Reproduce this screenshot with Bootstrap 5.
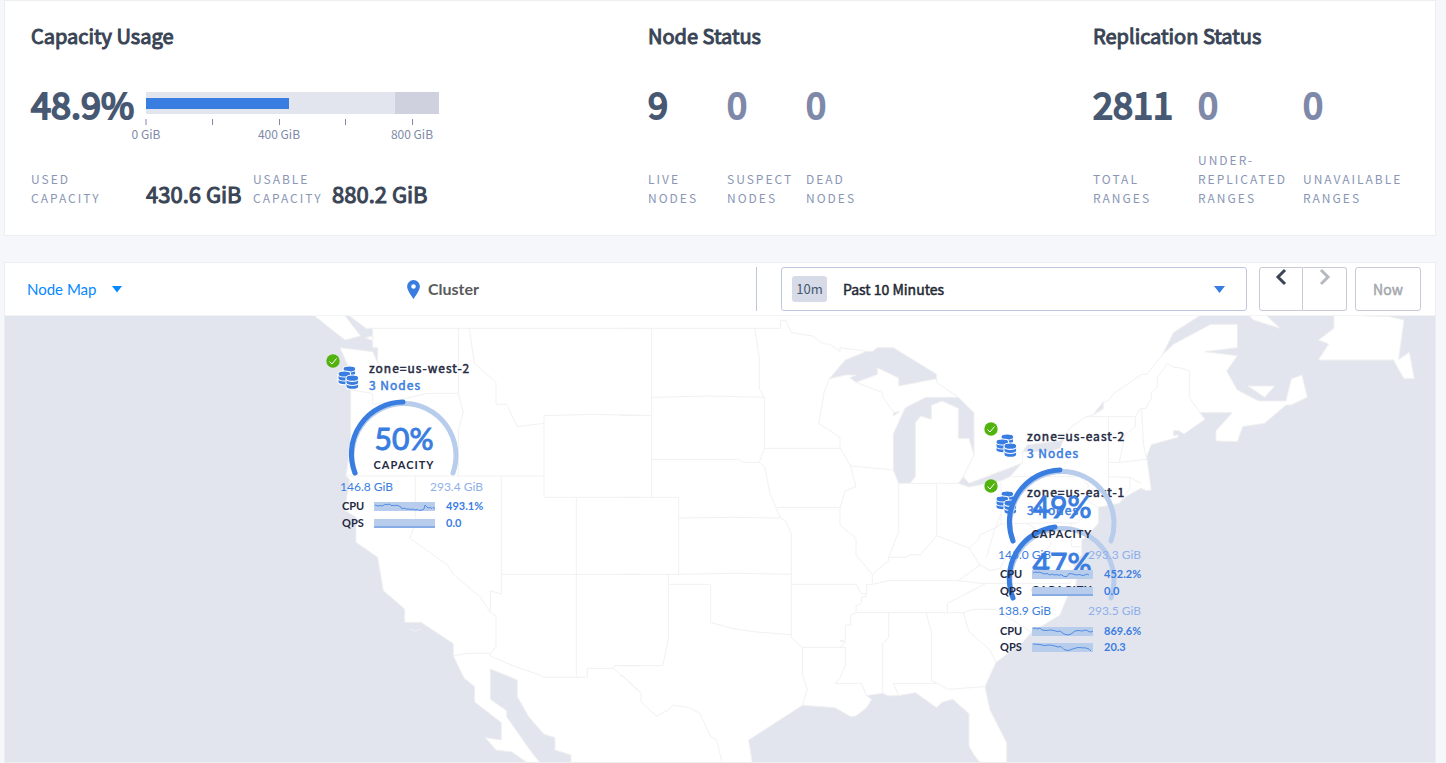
<!DOCTYPE html>
<html lang="en">
<head>
<meta charset="utf-8">
<meta name="viewport" content="width=device-width, initial-scale=1">
<title>Cluster Overview</title>
<link href="https://cdn.jsdelivr.net/npm/bootstrap@5.3.0/dist/css/bootstrap.min.css" rel="stylesheet">
<style>
  :root { --ui: "Noto Sans CJK SC", "Noto Sans", sans-serif; --lato: Lato, "Open Sans", sans-serif; }
  body { background: #f5f7fa; font-family: var(--ui); padding: 0 10px 1px 4px; }
  .panel { background: #fff; border: 1px solid #eceef1; }
  .summary { display: grid; grid-template-columns: 617fr 445fr 316fr; padding: 18px 26px 28px; margin-bottom: 26px; }
  .summary h2 { font-size: 20px; line-height: 34px; font-weight: 400; color: #394455; margin: 0 0 30px; -webkit-text-stroke: 1px; }
  .stats { display: grid; row-gap: 27px; margin: 0; grid-auto-flow: column; grid-template-rows: 40px minmax(57px, auto); }
  .stats-nodes { grid-template-columns: repeat(3, 79px); }
  .stats-ranges { grid-template-columns: repeat(3, 105px); }
  .capacity { display: grid; grid-template-columns: 115px 107px 79px 110px; grid-template-rows: 40px 57px; row-gap: 27px; }
  .big { font-size: 36px; line-height: 40px; font-weight: 400; color: #475872; margin: 0; -webkit-text-stroke: 2px; }
  .idle { color: #7e89a9; }
  .caption { align-self: end; font-size: 12px; line-height: 19px; letter-spacing: 2px; text-transform: uppercase; font-weight: 400; color: #8a96b5; margin: 0; }
  .amount { align-self: end; font-size: 22px; line-height: 28px; font-weight: 400; -webkit-text-stroke: 1px; color: #394455; white-space: nowrap; }
  .gauge { grid-column: 2 / 5; overflow: visible; }
  .gauge text { font-size: 12px; fill: #7e89a9; text-anchor: middle; }
  .toolbar { display: grid; grid-template-columns: 402fr 349fr 679fr; height: 53px; align-items: center; border-bottom: 1px solid #f3f4f6; }
  .view-pick { font-family: var(--lato); font-size: 15px; color: #0788ff; padding: 0 0 0 22px; border: 0; background: none; }
  .crumb { font-family: var(--lato); font-size: 16px; font-weight: 700; color: #5a5a5a; }
  .time { border-left: 1px solid #c0c6d9; height: 44px; padding: 0 14px 0 24px; }
  .tbtn { background: #fff; border: 1px solid #c8cbd6; border-radius: 3px; height: 44px; font-size: 14px; padding: 0; }
  .tbtn:disabled { color: #a5a8ae; }
  .range { border-color: #c0c6e0; color: #242a35; padding: 0 21px 0 10px; -webkit-text-stroke: .5px; }
  .chip { background: #d6dbe7; color: #475872; border-radius: 3px; width: 35px; line-height: 26px; font-size: 13px; -webkit-text-stroke: 0; }
  .step { width: 44px; padding-bottom: 24px; line-height: 1; }
  .now { width: 66px; -webkit-text-stroke: .5px; }
  .map-wrap { min-height: 446px; }
  .map { display: block; width: 100%; height: 100%; background: #fff; }
  .water { fill: #e2e5ee; }
  .land { fill: #fff; }
  .water, .land, .lines { stroke: #f0f0f0; stroke-width: 1px; vector-effect: non-scaling-stroke; }
  .lines { fill: none; stroke: #f1f1f1; }
  .map text { font-family: var(--lato); font-weight: 700; font-size: 11px; fill: #3a7de1; }
  .map .dark { fill: #242a42; }
  .map .zone { font-family: var(--ui); font-size: 12px; letter-spacing: 1px; font-weight: 400; stroke: #3a7de1; stroke-width: .5px; }
  .map .zone.dark { stroke: #242a42; }
  .map .pct { font-size: 30px; font-weight: 400; text-anchor: middle; stroke: #3a7de1; stroke-width: 1px; }
  .map .cap { text-anchor: middle; letter-spacing: 1px; }
  .map .gib { font-size: 12px; font-weight: 400; }
  .map .faint { fill: #8fb0ea; text-anchor: end; }
  .arc { fill: none; stroke: #b8ccec; stroke-width: 5; stroke-linecap: round; }
  .arc.used { stroke: #3a7de1; }
  .spark { fill: none; stroke: #3a7de1; stroke-width: .8; }
</style>
</head>
<body class="d-flex flex-column min-vh-100">

<section class="panel summary">
  <div>
    <h2>Capacity Usage</h2>
    <div class="capacity">
      <div class="big">48.9%</div>
      <svg class="gauge" width="293" height="50" viewBox="0 0 293 50" role="img" aria-label="Capacity gauge">
        <rect y="9" width="293" height="22" fill="#e2e5ee"/>
        <rect x="249" y="9" width="44" height="22" fill="#cfd1de"/>
        <rect y="15" width="143" height="11" fill="#3a7de1"/>
        <path d="M0 36v6M66.500 36v6M133.500 36v6M199.500 36v6M266.500 36v6" stroke="#7e89a9"/>
        <text x="0" y="56">0 GiB</text><text x="133" y="56">400 GiB</text><text x="266" y="56">800 GiB</text>
      </svg>
      <div class="caption">Used<br>Capacity</div>
      <div class="amount">430.6 GiB</div>
      <div class="caption">Usable<br>Capacity</div>
      <div class="amount">880.2 GiB</div>
    </div>
  </div>
  <div>
    <h2>Node Status</h2>
    <div class="stats stats-nodes">
      <div class="big">9</div><div class="caption">Live<br>Nodes</div>
      <div class="big idle">0</div><div class="caption">Suspect<br>Nodes</div>
      <div class="big idle">0</div><div class="caption">Dead<br>Nodes</div>
    </div>
  </div>
  <div>
    <h2>Replication Status</h2>
    <div class="stats stats-ranges">
      <div class="big">2811</div><div class="caption">Total<br>Ranges</div>
      <div class="big idle">0</div><div class="caption">Under-<br>replicated<br>Ranges</div>
      <div class="big idle">0</div><div class="caption">Unavailable<br>Ranges</div>
    </div>
  </div>
</section>

<section class="panel d-flex flex-column flex-grow-1">
  <div class="toolbar">
    <div><button type="button" class="view-pick d-flex align-items-center">Node Map
      <svg class="ms-3" width="10" height="8" viewBox="0 0 10 8" aria-hidden="true"><path d="M0 1h10L5 7.500z" fill="#0788ff"/></svg></button></div>
    <div class="crumb d-flex align-items-center gap-2">
      <svg width="13" height="19" viewBox="0 0 13 19" aria-hidden="true"><path fill="#3a7de1" fill-rule="evenodd" d="M6.500 0A6.400 6.400 0 0 0 .1 6.500C.1 10.500 6.500 19 6.500 19s6.400-8.500 6.400-12.500A6.400 6.400 0 0 0 6.500 0zm0 4.200a2.300 2.300 0 1 1 0 4.600 2.300 2.300 0 0 1 0-4.600z"/></svg>
      Cluster</div>
    <div class="time d-flex">
      <button type="button" class="tbtn range d-flex align-items-center flex-grow-1">
        <span class="chip text-center">10m</span><span class="ms-3">Past 10 Minutes</span>
        <svg class="ms-auto" width="11" height="8" viewBox="0 0 11 8" aria-hidden="true"><path d="M0 1h11L5.500 8z" fill="#3a7de1"/></svg>
      </button>
      <div class="btn-group ms-2 ps-1 me-2">
        <button type="button" class="tbtn step rounded-end-0" aria-label="Previous timeframe"><svg width="12" height="18" viewBox="0 0 12 18" aria-hidden="true"><path d="M10 2 3 9l7 7" fill="none" stroke="#394455" stroke-width="3"/></svg></button>
        <button type="button" class="tbtn step rounded-start-0 border-start-0" disabled aria-label="Next timeframe"><svg width="12" height="18" viewBox="0 0 12 18" aria-hidden="true"><path d="m2 2 7 7-7 7" fill="none" stroke="#b6b9c0" stroke-width="3"/></svg></button>
      </div>
      <button type="button" class="tbtn now" disabled>Now</button>
    </div>
  </div>
  <div class="map-wrap flex-grow-1">
  <svg class="map" viewBox="0 0 1430 446" preserveAspectRatio="xMidYMin slice" role="img" aria-label="Node map">
    <defs>
      <g id="stack-disc">
        <path d="M0 2.500C0-.8 11-.8 11 2.500V9.500C11 12.800 0 12.800 0 9.500z" fill="#3a7de1" stroke="#fff" stroke-width=".9"/>
        <path d="M0 3.200c1 2.800 10 2.800 11 0M0 6.600c1 2.800 10 2.800 11 0" fill="none" stroke="#fff" stroke-width=".9"/>
      </g>
      <g id="zone-icon">
        <use href="#stack-disc" transform="translate(-61 -88) scale(1.150)"/>
        <use href="#stack-disc" transform="translate(-66 -83) scale(1.150)"/>
        <use href="#stack-disc" transform="translate(-58 -79) scale(1.150 1.200)"/>
        <circle cx="-71" cy="-93" r="6.700" fill="#52b30f"/>
        <path d="m-74.500-92.500 2.500 2.500 4.500-5.500" fill="none" stroke="#fff"/>
      </g>
      <path id="dial" class="arc" d="M-49 19A52 52 0 1 1 49 19"/>
    </defs>

    <!-- Atlantic side -->
    <g transform="translate(975 -6) scale(.333333)">
      <path class="water" d="M662 15 580 68 547 135 580 103 692 43H772V113L675 125 772 137 740 183 772 240 836 273H918L934 206 966 195 982 262 934 285 918 285 854 340 788 350 772 395 708 393V362L757 308H660L675 328 612 372 596 362H580V378L594 374V382L514 404 500 440 514 540 500 542 482 535 435 562 418 580 355 592V640L320 680 305 690V735L280 760 290 800 285 850 272 835 240 915 155 967 125 1000 48 1057 15 1130 30 1200 80 1298V1360H1372V15z"/>
      <path class="land" d="M1062 15V55L1015 90 1046 102 1015 150H1240L1272 206H1303L1288 127 1256 148 1272 30 1230 20 1155 18V15zM806 15 820 30 900 55 858 15zM804 228H884L854 262z"/>
      <path class="water" d="M128 425 142 404 240 393 258 372 240 415 205 425zM340 313 370 275V295z"/>
      <path class="lines" d="M318 320 340 315 370 297 372 275 385 272 402 250 485 193H500L547 135M128 425V460M258 372 272 352 318 320H466L482 295H498L514 265V250L532 230V203L562 160 580 172 600 173 628 183V262L660 308M466 320V350L435 375 418 457M385 318V560M385 457H418L500 448 490 400 485 295M385 500 450 502 482 520M450 502V535L418 580M95 500H300L325 525 320 570 355 592M63 515V642L230 638 290 640 320 615M63 642 45 655 20 740M140 640 190 670 215 700 200 720 240 740 290 790M0 820H272M0 898H48L155 967M272 640 275 710H305"/>
    </g>
    <!-- Plains, Great Lakes and Gulf -->
    <g transform="translate(615 -6) scale(.333333)">
      <path class="water" d="M386 1290 547 1186 645 1193 692 1220 708 1218 740 1193 755 1168 740 1157 788 1150 804 1157H836L886 1148 950 1193 966 1177 998 1168 1047 1211V1308L1062 1335 1080 1357V1365H398z"/>
      <path class="water" d="M628 206 676 150 740 124H758L772 113H820L950 193V206L836 228V204L772 173V193L708 217 690 204 708 195H676z"/>
      <path class="water" d="M855 295 870 286 918 262H1015L1062 308V435L1047 385H1015V295L966 273 934 286V328L902 318 886 338V500L870 520H836L820 480V372zM820 308 840 304 820 318z"/>
      <path class="water" d="M1015 520 1030 500 1047 520 1205 460 1170 500 1143 512 1047 531z"/>
      <path class="lines" d="M0 55H482V31H498L514 68 578 78 610 102H628L660 124V113L740 124M95 55V562M404 55 418 145V238L434 262V413L418 457 434 470 450 550 467 592 482 624 498 634 514 673V983L547 1012V1095L562 1138 547 1186M95 262 270 258 434 262M434 415H660M95 448H355L370 457H418M0 316H95M0 562H176V793M176 624 335 622 482 624M0 793H176L350 790 514 793M145 793V990L128 1067H0M145 823H272V937L335 955 400 965 514 974M514 823H708L724 850 740 852M467 592H660V645L708 685V735L757 793V823H740V858L724 862V880L708 888V908L692 915V945H676V990L660 993 676 995 660 1012M660 592 676 542 708 530 692 468 660 413V382L596 340 610 262 612 248 628 206M692 468 820 480M708 217 788 248V262L822 308M836 520V665L806 742V752L757 793M806 742H855L870 734H902L950 677V520M836 520H1015M950 206V217L1015 262M1062 435 1030 500M950 677 1047 714 1080 765 1015 812M1047 714 1078 685V675L1128 652 1143 610M1080 765 1110 782 1140 775 1170 720M757 823 806 812H1015L1095 822M547 1012H676V1067L660 1104 645 1120H724L740 1157M708 908H1030L1062 898H1128M806 908V983L788 1002V1150M918 908 934 965V1110L982 1138 1095 1130M950 1120H820L836 1157M1030 908 1047 965 1110 1020 1128 1057M982 908V880L1095 822M0 1095 15 1104 63 1150V1176L110 1219 145 1200 160 1185 208 1193 240 1211 272 1280 290 1290 305 1353"/>
    </g>
    <!-- Pacific side -->
    <g transform="translate(235 -6) scale(.333333)">
      <path class="water" d="M-710 15H325L378 55H398V113H413V158L398 125 300 113 332 185V400L318 498 330 510 313 600 348 622V697L413 742 430 842 494 897V937H543L640 1001V1038L672 1104 704 1130V1176L784 1238V1290L736 1283 768 1320 816 1326 860 1357V1365H-710z"/>
      <path class="land" d="M220 15 315 90 362 78 313 15zM375 83 398 78V92z"/>
      <path class="water" d="M751 1077 832 1110V1160L866 1220 912 1273 945 1283V1320L993 1335V1365H905L866 1315 800 1220V1202L751 1168z"/>
      <path class="lines" d="M378 55H1200M655 55V250M688 55 703 160 768 217V283H800L832 350 912 340M1200 316 1055 313 912 317V562H1200M332 240 398 250V283L480 270 560 250H655L670 307 655 360V498M318 498H912M526 498V640L510 685 623 765 640 793 720 860 751 907M784 498V852L751 842V907L768 917V1010L751 1030V1038L816 1066 896 1094 912 1102H1042V1075H1122V1067H1200M784 793H1200M1009 562V1102M640 1038 680 1030H751M1122 1077 1138 1092 1155 1104 1200 1146M510 957 526 964 543 957"/>
    </g>

    <!-- us-west-2 -->
    <g transform="translate(399 138)">
      <use href="#zone-icon"/><use href="#dial"/><path class="arc used" d="M-49 19A52 52 0 0 1-1-52"/>
      <text class="zone dark" x="-35" y="-81">zone=us-west-2</text><text class="zone" x="-35" y="-64">3 Nodes</text>
      <text class="pct" y="-4">50%</text><text class="cap dark" y="15">CAPACITY</text>
      <text class="gib" x="-64" y="37">146.8 GiB</text><text class="gib faint" x="79" y="37">293.4 GiB</text>
      <text class="dark" x="-62" y="56">CPU</text><text class="dark" x="-62" y="73">QPS</text>
      <path d="M-30 48h61v9h-61zM-30 65h61v9h-61z" fill="#b8ccec"/>
      <path class="spark" d="m-29 51 3 1 2-.500 2 .500 2-1 2-1 1 1 2-1 2 1 1 1 1-1 2 1 1-1 3 1 2 1 1 2 2-1 2 1h3l2 .500 2-.500 2 1 3-.500 1 1 3-.500 2-1 1-4 2 2 1 1 2-.500 2 1 1-1 2 1M-30 73h61"/>
      <text x="42" y="56">493.1%</text><text x="42" y="73">0.0</text>
    </g>
    <!-- us-east-1 -->
    <g transform="translate(1057 263)">
      <use href="#zone-icon"/><use href="#dial"/><path class="arc used" d="M-49 19A52 52 0 0 1-7-52"/>
      <text class="zone dark" x="-35" y="-82">zone=us-east-1</text><text class="zone" x="-35" y="-64">3 Nodes</text>
      <text class="pct" y="-4">47%</text><text class="cap dark" y="15">CAPACITY</text>
      <text class="gib" x="-64" y="36">138.9 GiB</text><text class="gib faint" x="79" y="36">293.5 GiB</text>
      <text class="dark" x="-62" y="56">CPU</text><text class="dark" x="-62" y="72">QPS</text>
      <path d="M-30 48h61v9h-61zM-30 64h61v9h-61z" fill="#b8ccec"/>
      <path class="spark" d="m-29 50 2-1 2 1 3-1 2 2 4 .500 4-.500 4 .500 3 1 3-.500 4 3 4 1 3-1 4-3 4-.500 3 .500 4-1 4 2 3-.500M-29 65l7 .500 4 1 6-.500 5 1 3 1 3-.500 3 3 4 1 3-1 3-1 4-1 8 .500 3 1 2 2"/>
      <text x="42" y="56">869.6%</text><text x="42" y="72">20.3</text>
    </g>
    <!-- us-east-2 -->
    <g transform="translate(1057 206)">
      <use href="#zone-icon"/><use href="#dial"/><path class="arc used" d="M-49 19A52 52 0 0 1-2-52"/>
      <text class="zone dark" x="-35" y="-81">zone=us-east-2</text><text class="zone" x="-35" y="-64">3 Nodes</text>
      <text class="pct" y="-4">49%</text><text class="cap dark" y="16">CAPACITY</text>
      <text class="gib" x="-64" y="37">145.0 GiB</text><text class="gib faint" x="79" y="37">293.3 GiB</text>
      <text class="dark" x="-62" y="56">CPU</text><text class="dark" x="-62" y="73">QPS</text>
      <path d="M-30 48h61v9h-61zM-30 65h61v9h-61z" fill="#b8ccec"/>
      <path class="spark" d="m-29 51 2-1 2 .500 2-.500 3 1 2 1 3-.500 3 1.500 2-1 2 1 3-.500 2 1 2-1 3 2h3l2-3 4 .500 3 1 4-.500 2 1 3-.500 2-1 2 1M-30 73h61"/>
      <text x="42" y="56">452.2%</text><text x="42" y="73">0.0</text>
    </g>
  </svg>
  </div>
</section>

<script src="https://cdn.jsdelivr.net/npm/bootstrap@5.3.0/dist/js/bootstrap.bundle.min.js"></script>
</body>
</html>
